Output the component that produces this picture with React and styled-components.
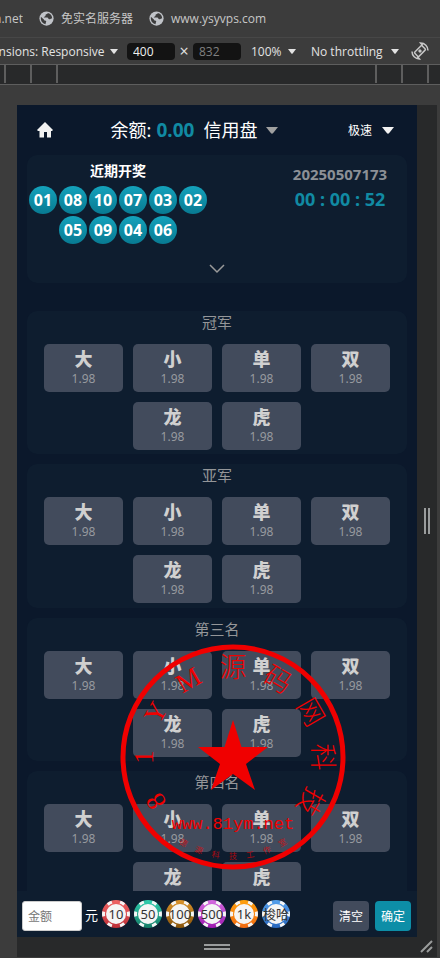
import React from "react";
import styled, { createGlobalStyle } from "styled-components";

const ui = '"Open Sans", "Noto Sans CJK SC", sans-serif';
const app = '"Noto Sans", "Noto Sans CJK SC", sans-serif';

const Global = createGlobalStyle`
  *, *::before, *::after { box-sizing: border-box; }
  body { margin: 0; background: #3c3c3c; font-family: ${ui}; }
  button, input, select { font: inherit; margin: 0; }
  h1, h2, p { margin: 0; }
`;

const Shell = styled.div`
  height: 100vh;
  display: flex;
  flex-direction: column;
  overflow: hidden;
  background: #3c3c3c;
`;

const Bookmarks = styled.nav`
  flex: 0 0 38px;
  display: flex;
  align-items: center;
  border-bottom: 1px solid #474747;
  font-size: 12px;
`;

const Bookmark = styled.a`
  display: flex;
  align-items: center;
  gap: 7px;
  margin-right: 16px;
  color: #c7c7c7;
  line-height: 18px;
  text-decoration: none;
  white-space: nowrap;
`;

const ClippedBookmark = styled(Bookmark)`
  width: 23px;
  overflow: hidden;
  justify-content: flex-end;
`;

const Toolbar = styled.div`
  flex: 0 0 27px;
  display: flex;
  align-items: center;
  border-bottom: 1px solid #5e5e5e;
  color: #e3e3e3;
  font-size: 12px;
`;

const DimensionSlot = styled.div`
  flex: 0 0 127px;
  display: flex;
  justify-content: flex-end;
  overflow: hidden;
  padding-right: 9px;
`;

const Picker = styled.label`
  flex: none;
  display: flex;
  align-items: center;
  gap: ${(p) => p.$gap || 5}px;
  margin-left: ${(p) => p.$before || 0}px;
  margin-right: ${(p) => p.$after || 0}px;
`;

const Select = styled.select`
  appearance: none;
  width: ${(p) => p.$width}px;
  height: ${(p) => p.$height || 20}px;
  padding: 0;
  border: 0;
  background: transparent;
  color: inherit;
  font-size: ${(p) => p.$size || 12}px;
`;

const SizeInput = styled.input`
  width: 48px;
  height: 17px;
  padding: 0 6px;
  border: 0;
  border-radius: 4px;
  background: #131313;
  color: ${(p) => (p.disabled ? "#808080" : "#f0f0f0")};
  font-size: 12px;
`;

const Times = styled.span`
  width: 18px;
  text-align: center;
  font-size: 16px;
  line-height: 17px;
`;

const RotateButton = styled.button`
  display: flex;
  padding: 0;
  border: 0;
  background: transparent;
  color: #c7c7c7;
`;

const Ruler = styled.div`
  flex: 0 0 20px;
  display: flex;
  justify-content: space-between;
  background: #28292a;
  border-bottom: 1px solid #5e5e5e;
`;

const Ticks = styled.div`
  display: flex;
  padding: 0 ${(p) => (p.$end ? 11 : 0)}px 0 ${(p) => (p.$end ? 0 : 4)}px;
  gap: 24px;
`;

const Tick = styled.i`
  width: 2px;
  height: 18px;
  background: #5e5e5e;
`;

const Stage = styled.main`
  flex: 1;
  min-height: 0;
  display: grid;
  grid-template-columns: minmax(0, 1fr) 20px;
  grid-template-rows: minmax(0, 1fr) 20px;
  padding: 20px 3px 1px 17px;
`;

const Grip = styled.div`
  display: flex;
  align-items: center;
  justify-content: center;
  background: #28292a;
`;

const Device = styled.section`
  position: relative;
  display: flex;
  flex-direction: column;
  min-height: 0;
  overflow: hidden;
  background: #0b182b;
  color: #fff;
  font-family: ${app};
`;

const Header = styled.header`
  flex: 0 0 50px;
  display: flex;
  align-items: center;
  justify-content: space-between;
  padding: 0 23px 0 19px;
`;

const HomeLink = styled.a`
  display: flex;
  width: 45px;
  color: #f2f2f2;
`;

const Account = styled.div`
  display: flex;
  align-items: center;
  justify-content: center;
  padding-right: 40px;
  font-size: 18px;
  line-height: 28px;
  white-space: nowrap;
`;

const Balance = styled.strong`
  margin: 0 9px 0 5px;
  color: #118aa3;
  font-size: 19px;
`;

const Scroll = styled.div`
  flex: 1;
  min-height: 0;
  overflow: hidden;
  padding: 0 10px;
`;

const Card = styled.section`
  border-radius: 10px;
  background: #0e1d2f;
`;

const DrawCard = styled(Card)`
  height: 128px;
  margin-bottom: 28px;
  padding-top: 5px;
  display: grid;
  grid-template-columns: 182px 134px;
  grid-template-rows: 89px 28px;
  justify-content: space-between;
`;

const DrawTitle = styled.h1`
  font-size: 14px;
  line-height: 22px;
  text-align: center;
`;

const Balls = styled.ol`
  display: flex;
  flex-wrap: wrap;
  justify-content: center;
  gap: 2px;
  margin: 4px 0 0;
  padding: 0;
  list-style: none;
`;

const Ball = styled.li`
  width: 28px;
  height: 28px;
  border-radius: 50%;
  background: linear-gradient(#14a2bb, #087a92);
  font-size: 16px;
  font-weight: 700;
  line-height: 28px;
  text-align: center;
`;

const Timer = styled.div`
  display: flex;
  flex-direction: column;
  align-items: center;
  padding-top: 3px;
  font-weight: 700;
`;

const Issue = styled.p`
  color: #8c9096;
  font-size: 15px;
  line-height: 23px;
`;

const Clock = styled.p`
  color: #118aa3;
  font-size: 18px;
  line-height: 27px;
`;

const Expand = styled.button`
  grid-column: 1 / -1;
  display: flex;
  align-items: center;
  justify-content: center;
  padding: 12px 0 0;
  border: 0;
  background: transparent;
`;

const Group = styled(Card)`
  height: 144px;
  margin-bottom: 10px;
  &:nth-child(even) { height: 143px; }
`;

const GroupTitle = styled.h2`
  height: 33px;
  color: #949699;
  font-size: 15px;
  font-weight: 400;
  line-height: 23px;
  text-align: center;
`;

const Bets = styled.div`
  display: flex;
  flex-wrap: wrap;
  justify-content: center;
  gap: 10px;
  padding: 0 17px;
`;

const Bet = styled.button`
  display: flex;
  flex-direction: column;
  align-items: center;
  width: calc((100% - 30px) / 4);
  height: 48px;
  padding: 4px 0 0;
  border: 0;
  border-radius: 5px;
  background: #424b5c;
  color: #d0d0d0;
`;

const BetName = styled.b`
  font-size: 18px;
  font-weight: 900;
  line-height: 22px;
`;

const Odds = styled.span`
  color: #979a9f;
  font-size: 12px;
  line-height: 17px;
`;

const Footer = styled.footer`
  flex: 0 0 46px;
  display: flex;
  align-items: center;
  padding: 4px 6px 0 5px;
  background: #0e1d2f;
`;

const AmountLabel = styled.label`
  display: flex;
  align-items: flex-start;
  gap: 3px;
  margin-right: 3px;
  font-size: 13px;
  line-height: 28px;
`;

const Amount = styled.input`
  width: 60px;
  height: 30px;
  padding: 0 5px;
  border: 1px solid #ccc;
  border-radius: 3px;
  background: #fff;
  font-size: 12px;
  &::placeholder { color: #777; }
`;

const Chips = styled.div`
  display: flex;
  gap: 2px;
  margin: -4px auto 0 0;
`;

const ChipButton = styled.button`
  display: grid;
  place-items: center;
  width: 30px;
  height: 30px;
  padding: 0;
  border: 0;
  background: transparent;
  color: #333;
  font-size: 13px;
  line-height: 20px;
  white-space: nowrap;
  > * { grid-area: 1 / 1; }
`;

const Action = styled.button`
  width: 36px;
  height: 30px;
  margin-left: 6px;
  padding: 0;
  border: 0;
  border-radius: 4px;
  background: ${(p) => (p.$primary ? "#0d8ea7" : "#424b5c")};
  color: #fff;
  font-size: 12px;
`;

const Stamp = styled.svg`
  position: absolute;
  left: 50%;
  bottom: 67px;
  margin-left: -97px;
  pointer-events: none;
`;

const Caret = ({ width = 8, height = 5, color = "#e3e3e3" }) => (
  <svg width={width} height={height} viewBox="0 0 10 6" preserveAspectRatio="none" aria-hidden="true">
    <path d="M0 0h10L6 5.2Q5 6.4 4 5.2z" fill={color} />
  </svg>
);

const Globe = () => (
  <svg width="15" height="15" viewBox="0 0 16 16" aria-hidden="true">
    <circle cx="8" cy="8" r="7.6" fill="#c0c3c8" />
    <path d="M2 6.2 5.2 9c.3 1.2 1.4 1 2.2 1.5.6.6.1 1.5-.2 2.2L6.9 14C3.5 13.4 1.5 10.5 2 6.2zM9.4 2c-.2 1.5-1.6 1-2.2 1.8-.5.7.2 1.3-.6 1.9-.5.5-1.3.3-1.5 1.2h3.6c1.5.1 1 1.9 2.4 1.9 1 0 1.3-.9 2.9-.8C14.2 5 12.5 2.6 9.4 2z" fill="#3c3c3c" />
  </svg>
);

const polar = (r, deg) => {
  const a = (deg * Math.PI) / 180;
  return `${(15 + r * Math.sin(a)).toFixed(2)} ${(15 - r * Math.cos(a)).toFixed(2)}`;
};
const wedge = (deg) =>
  `M${polar(14, deg - 11)}A14 14 0 0 1 ${polar(14, deg + 11)}L${polar(11, deg + 11)}A11 11 0 0 0 ${polar(11, deg - 11)}z`;

const Chip = ({ id, label, light, dark }) => (
  <ChipButton type="button">
    <svg width="30" height="30" viewBox="0 0 30 30" aria-hidden="true">
      <defs>
        <linearGradient id={id} x2="0" y2="1">
          <stop stopColor={light} />
          <stop offset="1" stopColor={dark} />
        </linearGradient>
      </defs>
      <circle cx="15" cy="15" r="14" fill={`url(#${id})`} />
      {[30, 90, 150, 210, 270, 330].map((d) => (
        <path key={d} d={wedge(d)} fill="#f5f5f5" />
      ))}
      <circle cx="15" cy="15" r="10" fill="#f5f5f5" />
    </svg>
    <span>{label}</span>
  </ChipButton>
);

const chips = [
  { id: "c10", label: "10", light: "#f06464", dark: "#bd2f37" },
  { id: "c50", label: "50", light: "#30cfaf", dark: "#157b66" },
  { id: "c100", label: "100", light: "#dc942b", dark: "#875309" },
  { id: "c500", label: "500", light: "#d56be0", dark: "#9d18b0" },
  { id: "c1k", label: "1k", light: "#ffa10b", dark: "#f06a12" },
  { id: "call", label: "梭哈", light: "#54a0ed", dark: "#2867bd" },
];

const ringText = [..."81YM源码网科技"];
const footText = [..."德源科技工作室"];

const Seal = () => (
  <Stamp width="226" height="226" viewBox="-113 -113 226 226" fill="#f00000" fontFamily='"Liberation Serif", "Noto Sans CJK SC", serif'>
    <circle r="110" fill="none" stroke="#f00000" strokeWidth="5" />
    <path d="M0-37 8.5-10H35L13 7 22 33 0 17-22 33-13 7-35-10H-8.5z" />
    <g fontSize="27" fontWeight="300" textAnchor="middle">
      {ringText.map((c, i) => (
        <text key={i} y="-80" transform={`rotate(${(i - 4) * 30})`}>{c}</text>
      ))}
    </g>
    <g fontSize="8" textAnchor="middle" opacity="0.7">
      {footText.map((c, i) => (
        <text key={i} y="102" transform={`rotate(${(3 - i) * 10})`}>{c}</text>
      ))}
    </g>
    <text y="72" fontSize="17" textAnchor="middle" fontFamily='"Liberation Mono", monospace'>
      www.81ym.net
    </text>
  </Stamp>
);

const balls = ["01", "08", "10", "07", "03", "02", "05", "09", "04", "06"];
const groups = ["冠军", "亚军", "第三名", "第四名"];
const bets = ["大", "小", "单", "双", "龙", "虎"];

export default function App() {
  return (
    <Shell>
      <Global />
      <Bookmarks aria-label="书签">
        <ClippedBookmark href="#net">m.net</ClippedBookmark>
        <Bookmark href="#server"><Globe />免实名服务器</Bookmark>
        <Bookmark href="#vps"><Globe />www.ysyvps.com</Bookmark>
      </Bookmarks>

      <Toolbar>
        <DimensionSlot>
          <Picker>
            <Select $width={136} aria-label="Dimensions"><option>Dimensions: Responsive</option></Select>
            <Caret />
          </Picker>
        </DimensionSlot>
        <SizeInput aria-label="Width" defaultValue="400" />
        <Times>×</Times>
        <SizeInput aria-label="Height" defaultValue="832" disabled />
        <Picker $before={10} $after={15}>
          <Select $width={32} aria-label="Zoom"><option>100%</option></Select>
          <Caret />
        </Picker>
        <Picker $after={12}>
          <Select $width={75} aria-label="Throttling"><option>No throttling</option></Select>
          <Caret />
        </Picker>
        <RotateButton type="button" aria-label="Rotate">
          <svg width="18" height="18" viewBox="0 0 18 18" fill="none" stroke="currentColor" strokeWidth="1.5">
            <rect x="6" y="3.8" width="6" height="10.5" rx="1" transform="rotate(45 9 9)" />
            <path d="M7.5 9.5 9.5 7.5M8.5 10.5l2-2M1 9.5C1 13.5 4.2 17 8.5 17l-2.2-2.6M17 8.5C17 4.5 13.8 1 9.5 1l2.2 2.6" />
          </svg>
        </RotateButton>
      </Toolbar>

      <Ruler>
        <Ticks><Tick /><Tick /><Tick /></Ticks>
        <Ticks $end><Tick /><Tick /><Tick /></Ticks>
      </Ruler>

      <Stage>
        <Device>
          <Header>
            <HomeLink href="#home" aria-label="首页">
              <svg width="18" height="18" viewBox="0 0 18 18" fill="currentColor">
                <path d="M9 1 17 9l-1 1h-1v6.5h-4V11H8v5.5H3.5V10H2L1 9z" />
              </svg>
            </HomeLink>
            <Account>
              <span>余额:</span>
              <Balance>0.00</Balance>
              <Picker $gap={8}>
                <Select $width={55} $height={28} $size={18} aria-label="盘口"><option>信用盘</option></Select>
                <Caret width={12} height={7} color="#a0a0a0" />
              </Picker>
            </Account>
            <Picker $gap={8}>
              <Select $width={26} aria-label="彩种"><option>极速</option></Select>
              <Caret width={12} height={7} color="#f2f2f2" />
            </Picker>
          </Header>

          <Scroll>
            <DrawCard>
              <div>
                <DrawTitle>近期开奖</DrawTitle>
                <Balls>{balls.map((n) => <Ball key={n}>{n}</Ball>)}</Balls>
              </div>
              <Timer>
                <Issue>20250507173</Issue>
                <Clock>00 : 00 : 52</Clock>
              </Timer>
              <Expand type="button" aria-label="展开">
                <svg width="16" height="10" viewBox="0 0 16 10" fill="none" stroke="#9a9a9a" strokeWidth="1.5">
                  <path d="M1 1l7 7 7-7" />
                </svg>
              </Expand>
            </DrawCard>
            {groups.map((g) => (
              <Group key={g}>
                <GroupTitle>{g}</GroupTitle>
                <Bets>
                  {bets.map((b) => (
                    <Bet key={b} type="button">
                      <BetName>{b}</BetName>
                      <Odds>1.98</Odds>
                    </Bet>
                  ))}
                </Bets>
              </Group>
            ))}
          </Scroll>

          <Footer>
            <AmountLabel>
              <Amount placeholder="金额" />
              元
            </AmountLabel>
            <Chips>{chips.map((c) => <Chip key={c.id} {...c} />)}</Chips>
            <Action type="button">清空</Action>
            <Action type="button" $primary>确定</Action>
          </Footer>
          <Seal />
        </Device>
        <Grip>
          <svg width="6" height="26" viewBox="0 0 6 26" fill="#9a9c9c"><path d="M0 0h2v26H0zM4 0h2v26H4z" /></svg>
        </Grip>
        <Grip>
          <svg width="26" height="6" viewBox="0 0 26 6" fill="#9a9c9c"><path d="M0 0h26v2H0zM0 4h26v2H0z" /></svg>
        </Grip>
        <Grip>
          <svg width="14" height="14" viewBox="0 0 14 14" stroke="#9a9c9c" strokeWidth="2"><path d="M1 12 12 1M7 12l5-5" /></svg>
        </Grip>
      </Stage>
    </Shell>
  );
}
